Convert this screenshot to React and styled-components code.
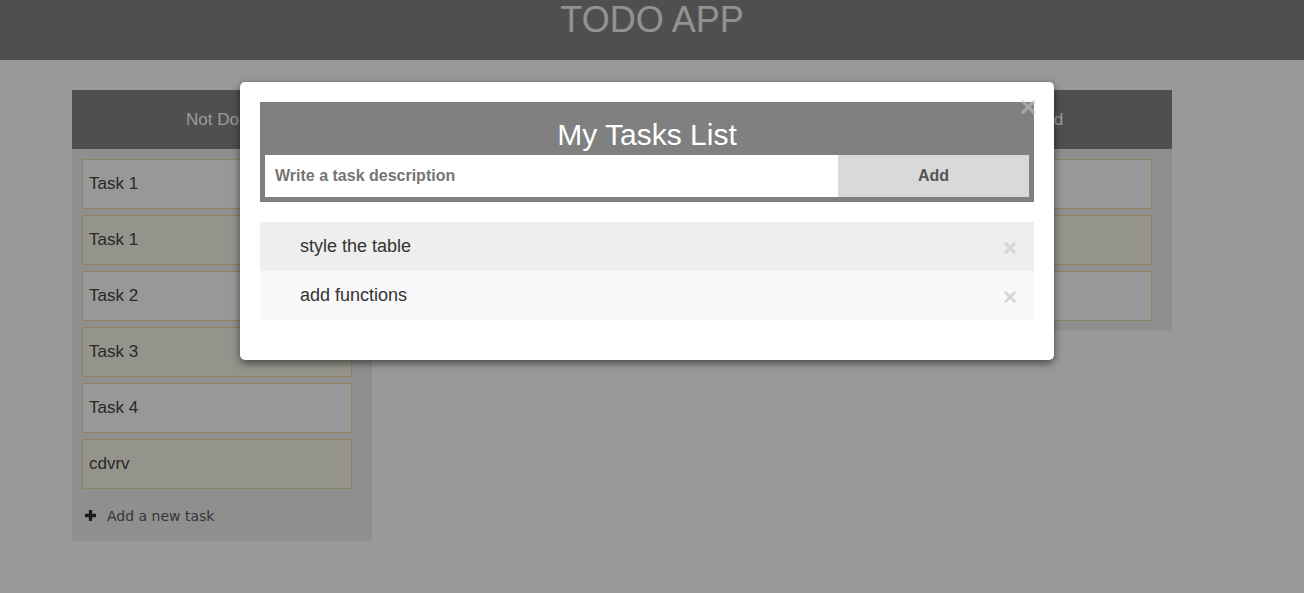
import React from 'react';
import styled, { createGlobalStyle } from 'styled-components';

const GlobalStyle = createGlobalStyle`
  body {
    margin: 0;
    background: #fff;
    font-family: "Liberation Sans", Arial, sans-serif;
  }
`;

const Page = styled.div`
  min-height: 593px;
  position: relative;
`;

const TopBar = styled.header`
  height: 60px;
  background-color: #848484;
  text-align: center;
`;

const AppTitle = styled.h1`
  margin: 0;
  font-size: 36px;
  font-weight: normal;
  line-height: 40px;
  color: #f4f4f4;
`;

const Board = styled.main`
  display: flex;
  align-items: flex-start;
  gap: 100px;
  padding: 30px 0 0 72px;
`;

const Column = styled.section`
  width: 300px;
  background-color: #eee;
`;

const ColumnHeader = styled.h3`
  margin: 0;
  height: 59px;
  line-height: 59px;
  text-align: center;
  font-size: 17px;
  font-weight: normal;
  color: #fff;
  background-color: #848484;
`;

const ColumnBody = styled.div`
  display: flex;
  flex-direction: column;
  gap: 6px;
  padding: 10px 0 10px 10px;
`;

const TaskCard = styled.div`
  width: 270px;
  height: 50px;
  box-sizing: border-box;
  display: flex;
  align-items: center;
  padding: 0 6px;
  font-size: 17px;
  color: #444;
  background-color: ${(p) => (p.$tinted ? '#f9f7ea' : '#fdfdfd')};
  border: 1px solid #e9dca2;
`;

const AddTask = styled.div`
  height: 36px;
  box-sizing: border-box;
  padding: 13px 0 0 3px;
  display: flex;
  align-items: flex-start;
  gap: 11px;
  font-family: "DejaVu Sans", Verdana, sans-serif;
  font-size: 14px;
  line-height: 17px;
  color: #5a5a5a;
`;

const Overlay = styled.div`
  position: absolute;
  inset: 0;
  background-color: rgba(0, 0, 0, 0.4);
`;

const Modal = styled.div`
  position: absolute;
  left: 240px;
  top: 82px;
  width: 774px;
  padding: 20px 20px 40px;
  background-color: #fff;
  border-radius: 5px;
  box-shadow: 0 3px 8px rgba(0, 0, 0, 0.55);
`;

const CloseModal = styled.span`
  position: absolute;
  top: 11px;
  right: 17px;
  font-size: 30px;
  font-weight: bold;
  line-height: 28px;
  color: rgba(200, 200, 200, 0.55);
  z-index: 1;
`;

const ListHeader = styled.div`
  background-color: #808080;
  padding: 16px 5px 5px;
  text-align: center;
`;

const ListTitle = styled.h2`
  margin: 0 0 3px;
  font-size: 30px;
  font-weight: normal;
  line-height: 34px;
  color: #fff;
`;

const InputRow = styled.div`
  display: flex;
`;

const TaskInput = styled.input`
  width: 75%;
  height: 42px;
  box-sizing: border-box;
  border: none;
  margin: 0;
  padding: 0 10px;
  font-family: "Liberation Sans", Arial, sans-serif;
  font-size: 16px;
  font-weight: bold;
  outline: none;
  &::placeholder {
    color: #757575;
  }
`;

const AddButton = styled.span`
  width: 25%;
  height: 42px;
  line-height: 42px;
  text-align: center;
  background-color: #d9d9d9;
  color: #555;
  font-size: 16px;
  font-weight: bold;
`;

const TaskList = styled.ul`
  list-style: none;
  margin: 20px 0 0;
  padding: 0;
`;

const TaskItem = styled.li`
  position: relative;
  padding: 14px 8px 14px 40px;
  font-size: 18px;
  line-height: 21px;
  color: #333;
  background-color: ${(p) => (p.$shade ? '#eee' : '#f9f9f9')};
`;

const RemoveButton = styled.span`
  position: absolute;
  right: 0;
  top: 1px;
  padding: 14px 17px;
  font-size: 24px;
  font-weight: bold;
  line-height: 21px;
  color: #d6d6d6;
`;

const PlusIcon = () => (
  <svg width="11" height="11" viewBox="0 0 10 10" style={{ marginTop: 2 }}>
    <path d="M3.5 0h3v3.5H10v3H6.5V10h-3V6.5H0v-3h3.5z" fill="#2e2e2e" />
  </svg>
);

const columns = [
  { title: 'Not Done', tasks: ['Task 1', 'Task 1', 'Task 2', 'Task 3', 'Task 4', 'cdvrv'], add: true },
  { title: 'In Progress', tasks: ['Task 5', 'Task 6'] },
  { title: 'Completed', tasks: ['Task 7', 'Task 8', 'Task 9'] },
];

const myTasks = ['style the table', 'add functions'];

export default function App() {
  return (
    <Page>
      <GlobalStyle />
      <TopBar>
        <AppTitle>TODO APP</AppTitle>
      </TopBar>
      <Board>
        {columns.map((col) => (
          <Column key={col.title}>
            <ColumnHeader>{col.title}</ColumnHeader>
            <ColumnBody>
              {col.tasks.map((t, i) => (
                <TaskCard key={i} $tinted={i % 2 === 1}>{t}</TaskCard>
              ))}
              {col.add && (
                <AddTask>
                  <PlusIcon />
                  Add a new task
                </AddTask>
              )}
            </ColumnBody>
          </Column>
        ))}
      </Board>
      <Overlay>
        <Modal>
          <CloseModal>×</CloseModal>
          <ListHeader>
            <ListTitle>My Tasks List</ListTitle>
            <InputRow>
              <TaskInput placeholder="Write a task description" />
              <AddButton>Add</AddButton>
            </InputRow>
          </ListHeader>
          <TaskList>
            {myTasks.map((t, i) => (
              <TaskItem key={t} $shade={i === 0}>
                {t}
                <RemoveButton>×</RemoveButton>
              </TaskItem>
            ))}
          </TaskList>
        </Modal>
      </Overlay>
    </Page>
  );
}
